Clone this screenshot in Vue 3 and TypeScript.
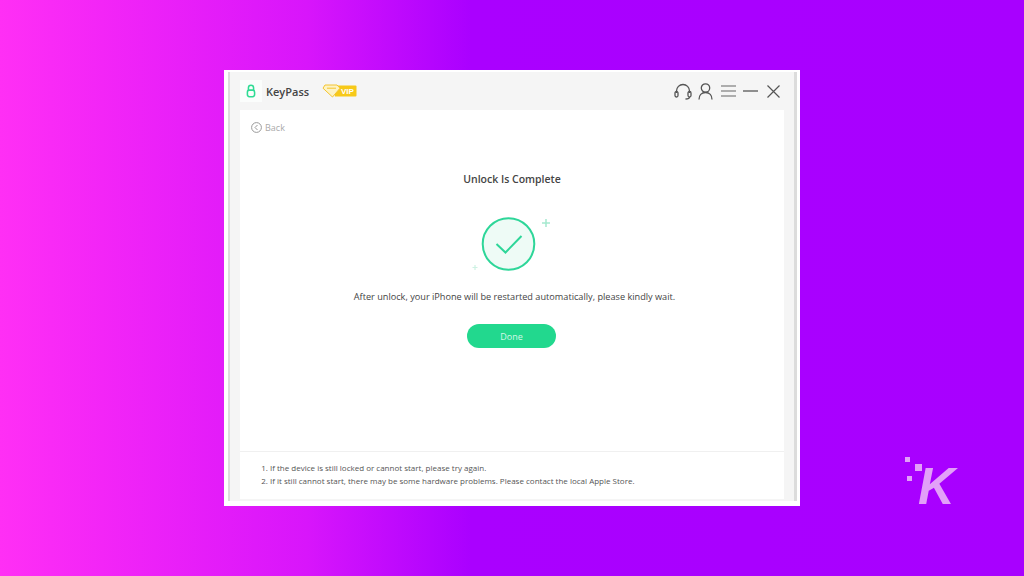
<template>
  <div class="stage">
    <div class="window">
      <div class="frame">
        <header class="titlebar">
          <div class="brand">
            <span class="brand-icon">
              <svg width="12" height="14" viewBox="0 0 14 16" fill="none" stroke="#2fdc94" stroke-width="1.8">
                <path d="M4 7V4.2a3 3 0 0 1 6 0V7" />
                <rect x="2.8" y="7" width="8.4" height="7.6" rx="2.4" />
              </svg>
            </span>
            <span class="brand-name">KeyPass</span>
            <svg class="vip" width="35" height="14" viewBox="0 0 35 14">
              <path d="M11 1.5h22.5a1 1 0 0 1 1 1v9a1 1 0 0 1-1 1H13z" fill="#f7c919" />
              <path d="M3 1h12l3 3.2-7.500 8.800L1 4.200z" fill="#fdf3c4" stroke="#f4c430" stroke-width="1" />
              <path d="M5 4.200h9" stroke="#f4c430" stroke-width="1" />
              <text x="19" y="10.200" class="vip-text">VIP</text>
            </svg>
          </div>
          <div class="controls">
            <svg width="18" height="17" viewBox="0 0 18 17" fill="none" stroke="#555" stroke-width="1.300">
              <path d="M2.500 10V8a6.500 6.500 0 0 1 13 0v2" />
              <rect x="1" y="8.500" width="3" height="5.500" rx="1.500" />
              <rect x="14" y="8.500" width="3" height="5.500" rx="1.500" />
              <path d="M15.500 14c0 1.200-1.500 2-4 2" />
            </svg>
            <svg width="15" height="17" viewBox="0 0 15 17" fill="none" stroke="#555" stroke-width="1.300">
              <circle cx="7.500" cy="5" r="4.200" />
              <path d="M1 16.500c0-4 2.500-7 6.500-7s6.500 3 6.500 7" />
            </svg>
            <svg width="15" height="12" viewBox="0 0 15 12" fill="none" stroke="#666" stroke-width="1.200">
              <path d="M0 1h15M0 6h15M0 11h15" />
            </svg>
            <svg width="15" height="2" viewBox="0 0 15 2" fill="none" stroke="#555" stroke-width="1.300">
              <path d="M0 1h15" />
            </svg>
            <svg width="13" height="13" viewBox="0 0 13 13" fill="none" stroke="#555" stroke-width="1.200">
              <path d="M.5.5l12 12M12.500.5l-12 12" />
            </svg>
          </div>
        </header>

        <main class="panel">
          <div class="back">
            <svg width="11" height="11" viewBox="0 0 11 11" fill="none" stroke="#999" stroke-width="1">
              <circle cx="5.500" cy="5.500" r="4.900" />
              <path d="M6.500 3L4 5.500 6.500 8" />
            </svg>
            <span>Back</span>
          </div>

          <div class="result">
            <h1 class="result-title">Unlock Is Complete</h1>
            <svg class="check" width="84" height="62" viewBox="0 0 84 62" fill="none">
              <circle cx="38.500" cy="33" r="25.800" fill="#eefbf6" stroke="#2ed699" stroke-width="2" />
              <path d="M26.500 33l9 8.500L51.500 25" stroke="#2ed699" stroke-width="2" />
              <path d="M76 8v8M72 12h8" stroke="#a5e9cf" stroke-width="1.500" />
              <path d="M5 54v5M2.500 56.500h5" stroke="#cdf2e3" stroke-width="1.200" />
            </svg>
            <p class="result-text">After unlock, your iPhone will be restarted automatically, please kindly wait.</p>
            <button class="done">Done</button>
          </div>

          <ol class="notes">
            <li v-for="note in notes" :key="note">{{ note }}</li>
          </ol>
        </main>
      </div>
    </div>

    <div class="watermark">
      <i class="dot dot-a"></i>
      <i class="dot dot-b"></i>
      <i class="dot dot-c"></i>
      <span class="k">K</span>
    </div>
  </div>
</template>

<script setup lang="ts">
const notes: string[] = [
  'If the device is still locked or cannot start, please try again.',
  'If it still cannot start, there may be some hardware problems. Please contact the local Apple Store.',
]
</script>

<style>
html,
body {
  margin: 0;
  overflow: hidden;
}
</style>

<style scoped>
.stage {
  position: relative;
  box-sizing: border-box;
  width: 1024px;
  height: 576px;
  padding: 70px 224px;
  background: linear-gradient(90deg, #ff2ff5 0%, #f325f7 10%, #d815fb 30%, #aa00ff 46%, #a800ff 100%);
  font-family: 'Open Sans', 'Liberation Sans', sans-serif;
}

.window {
  box-sizing: border-box;
  height: 436px;
  padding: 2px 3px 5px 4px;
  background: #fff;
}

.frame {
  box-sizing: border-box;
  display: flex;
  flex-direction: column;
  height: 100%;
  padding: 0 10px 2px 10px;
  background: #f5f5f5;
  border-left: 2px solid #dcdcdc;
  border-right: 3px solid #dcdcdc;
}

.titlebar {
  display: flex;
  align-items: center;
  justify-content: space-between;
  flex: none;
  height: 38px;
  padding-right: 4px;
}

.brand {
  display: flex;
  align-items: center;
}

.brand-icon {
  display: flex;
  align-items: center;
  justify-content: center;
  width: 22px;
  height: 22px;
  margin-right: 2px;
  background: #fbfdfc;
}

.brand-name {
  margin-left: 2px;
  font-size: 11px;
  font-weight: 600;
  color: #444;
}

.vip {
  margin-left: 13px;
}

.vip-text {
  font-family: 'Liberation Sans', sans-serif;
  font-size: 8px;
  font-weight: 700;
  fill: #fff;
}

.controls {
  display: flex;
  align-items: center;
  gap: 7px;
}

.controls svg:nth-child(2) {
  margin-left: -1px;
}

.controls svg:nth-child(3) {
  margin-left: 1px;
}

.controls svg:nth-child(5) {
  margin-left: 2px;
}

.panel {
  display: flex;
  flex-direction: column;
  flex: 1;
  min-height: 0;
  background: #fff;
}

.back {
  display: flex;
  align-items: center;
  gap: 3px;
  height: 14px;
  margin: 10px 0 0 11px;
  font-size: 9px;
  color: #aaa;
}

.result {
  display: flex;
  flex-direction: column;
  align-items: center;
  flex: 1;
  min-height: 0;
}

.result-title {
  margin: 37px 0 0;
  font-size: 10.500px;
  line-height: 16px;
  font-weight: 600;
  color: #444;
}

.check {
  margin: 24px 0 0;
}

.result-text {
  margin: 17px 0 0 5px;
  font-size: 9.160px;
  line-height: 14px;
  color: #444;
}

.done {
  width: 89px;
  height: 24px;
  margin: 20px 1px 0 0;
  padding: 0;
  border: none;
  border-radius: 12px;
  background: #22d88e;
  color: #d5f7e8;
  font-family: inherit;
  font-size: 9px;
}

.notes {
  flex: none;
  box-sizing: border-box;
  height: 48px;
  margin: 0;
  padding: 9px 0 0 30px;
  border-top: 1px solid #f0f0f0;
  font-size: 8px;
  line-height: 13px;
  color: #555;
}

.watermark {
  position: absolute;
  left: 902px;
  top: 454px;
  width: 56px;
  height: 54px;
}

.dot {
  position: absolute;
  background: #e2a0f8;
}

.dot-a {
  left: 3px;
  top: 3px;
  width: 5px;
  height: 5px;
}

.dot-b {
  left: 13px;
  top: 10px;
  width: 7px;
  height: 7px;
}

.dot-c {
  left: 5px;
  top: 22px;
  width: 5px;
  height: 5px;
}

.k {
  position: absolute;
  left: 16px;
  top: 3px;
  font-family: 'Liberation Sans', sans-serif;
  font-size: 51px;
  line-height: 60px;
  font-weight: 700;
  font-style: italic;
  color: #e2a0f8;
}
</style>
